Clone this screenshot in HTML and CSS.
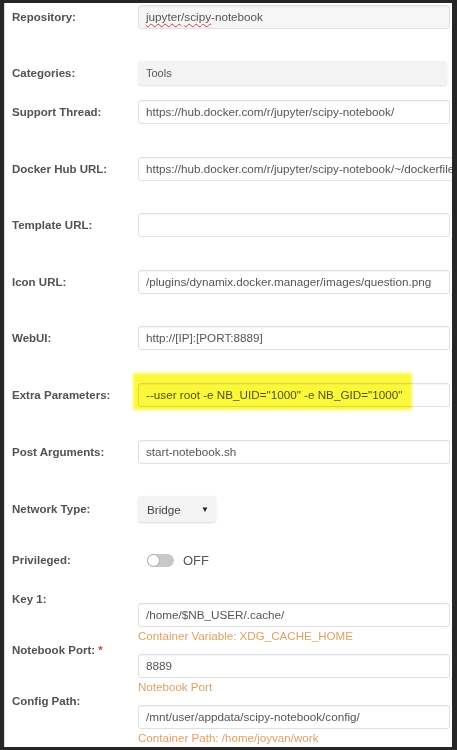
FILE: index.html
```html
<!DOCTYPE html>
<html lang="en">
<head>
    <meta charset="UTF-8">
    <meta name="viewport" content="width=device-width, initial-scale=1.0">
    <title>Container Settings</title>
    <link rel="stylesheet" href="styles.css">
</head>
<body>
    <div class="page">
        <div class="field field-first">
            <label>Repository:</label>
            <div class="value">
                <div class="box box-muted"><span class="misspelled">jupyter</span>/<span class="misspelled">scipy</span>-notebook</div>
            </div>
        </div>

        <div class="field field-tight">
            <label>Categories:</label>
            <div class="value">
                <div class="box box-flat">Tools</div>
            </div>
        </div>

        <div class="field">
            <label>Support Thread:</label>
            <div class="value">
                <div class="box">https://hub.docker.com/r/jupyter/scipy-notebook/</div>
            </div>
        </div>

        <div class="field">
            <label>Docker Hub URL:</label>
            <div class="value">
                <div class="box box-clip">https://hub.docker.com/r/jupyter/scipy-notebook/~/dockerfile/</div>
            </div>
        </div>

        <div class="field">
            <label>Template URL:</label>
            <div class="value">
                <div class="box"></div>
            </div>
        </div>

        <div class="field">
            <label>Icon URL:</label>
            <div class="value">
                <div class="box">/plugins/dynamix.docker.manager/images/question.png</div>
            </div>
        </div>

        <div class="field">
            <label>WebUI:</label>
            <div class="value">
                <div class="box">http://[IP]:[PORT:8889]</div>
            </div>
        </div>

        <div class="field">
            <label>Extra Parameters:</label>
            <div class="value">
                <div class="box">--user root -e NB_UID="1000" -e NB_GID="1000"</div>
                <div class="highlight"></div>
            </div>
        </div>

        <div class="field">
            <label>Post Arguments:</label>
            <div class="value">
                <div class="box">start-notebook.sh</div>
            </div>
        </div>

        <div class="field field-select">
            <label>Network Type:</label>
            <div class="value">
                <div class="select"><span>Bridge</span><span class="arrow">&#9660;</span></div>
            </div>
        </div>

        <div class="field field-switch">
            <label>Privileged:</label>
            <div class="value switch-wrap">
                <div class="switch"><div class="knob"></div></div>
                <span class="switch-text">OFF</span>
            </div>
        </div>

        <div class="param">
            <label>Key 1:</label>
            <div class="value">
                <div class="box">/home/$NB_USER/.cache/</div>
                <p class="help">Container Variable: XDG_CACHE_HOME</p>
            </div>
        </div>

        <div class="param">
            <label>Notebook Port: <span class="required">*</span></label>
            <div class="value">
                <div class="box">8889</div>
                <p class="help">Notebook Port</p>
            </div>
        </div>

        <div class="param">
            <label>Config Path:</label>
            <div class="value">
                <div class="box">/mnt/user/appdata/scipy-notebook/config/</div>
                <p class="help">Container Path: /home/joyvan/work</p>
            </div>
        </div>
    </div>
</body>
</html>
```

FILE: styles.css
```css
/* Reset */
* {
    margin: 0;
    padding: 0;
    box-sizing: border-box;
}

body {
    background: #262626;
    padding: 3px 5px 3px 4px;
    font-family: "Liberation Sans", Arial, sans-serif;
    color: #555;
}

/* Page panel */
.page {
    background: #fff;
    height: 744px;
    overflow: hidden;
    padding-top: 2px;
    border-left: 1px solid #d8d8d8;
}

/* Form rows */
.field {
    display: flex;
    align-items: center;
    margin-bottom: 32.6px;
}

.field-first {
    margin-bottom: 32px;
}

.field-tight {
    margin-bottom: 15px;
}

.field-select {
    margin-bottom: 31px;
}

.field-switch {
    margin-bottom: 25px;
}

label {
    width: 133px;
    flex-shrink: 0;
    padding-left: 7px;
    font-size: 11.5px;
    font-weight: bold;
    line-height: 14px;
    color: #525252;
}

.value {
    flex: 1;
    margin-right: 2px;
    position: relative;
}

.box {
    height: 24px;
    border: 1px solid #e0e0e0;
    border-radius: 3px;
    padding: 0 7px;
    font-size: 11.7px;
    line-height: 22px;
    color: #555;
    white-space: nowrap;
    overflow: hidden;
    background: #fff;
    box-shadow: inset 0 1px 1px rgba(0, 0, 0, 0.04);
}

.box-muted {
    background: #f6f6f6;
}

.box-flat {
    margin-right: 3px;
    border-color: #f3f3f3;
    background: #f3f3f3;
    font-size: 11px;
    box-shadow: 0 1px 2px rgba(0, 0, 0, 0.12);
}

.box-clip {
    padding-right: 0;
}

.misspelled {
    text-decoration: underline wavy #d23a3a;
    text-decoration-thickness: 1px;
    text-underline-offset: 2px;
}

/* Yellow marker over the extra parameters */
.highlight {
    position: absolute;
    left: -5px;
    top: -10px;
    width: 279px;
    height: 37px;
    background: #fbf83c;
    mix-blend-mode: multiply;
    filter: blur(1.5px);
    pointer-events: none;
}

/* Network select */
.select {
    width: 78px;
    height: 26px;
    display: flex;
    align-items: center;
    justify-content: space-between;
    padding: 0 7px 0 9px;
    background: #f3f3f3;
    border-radius: 3px;
    box-shadow: 0 1px 2px rgba(0, 0, 0, 0.15);
    font-size: 11.7px;
    color: #444;
}

.arrow {
    font-size: 8px;
    color: #222;
}

/* Privileged switch */
.switch-wrap {
    display: flex;
    align-items: center;
    height: 14px;
    padding-left: 9px;
}

.switch {
    width: 27px;
    height: 13px;
    border-radius: 7px;
    background: #c8c8c8;
    position: relative;
}

.knob {
    position: absolute;
    left: 0;
    top: 0;
    width: 13px;
    height: 13px;
    border-radius: 50%;
    background: #fff;
    border: 1px solid #aaa;
}

.switch-text {
    margin-left: 9px;
    font-size: 13px;
    color: #555;
}

/* Template parameters */
.param {
    display: flex;
    align-items: flex-start;
}

.param .value {
    padding-top: 11px;
}

.help {
    margin-top: 2px;
    font-size: 11.6px;
    line-height: 14px;
    color: #e0a063;
}

.required {
    color: #d04040;
}
```
